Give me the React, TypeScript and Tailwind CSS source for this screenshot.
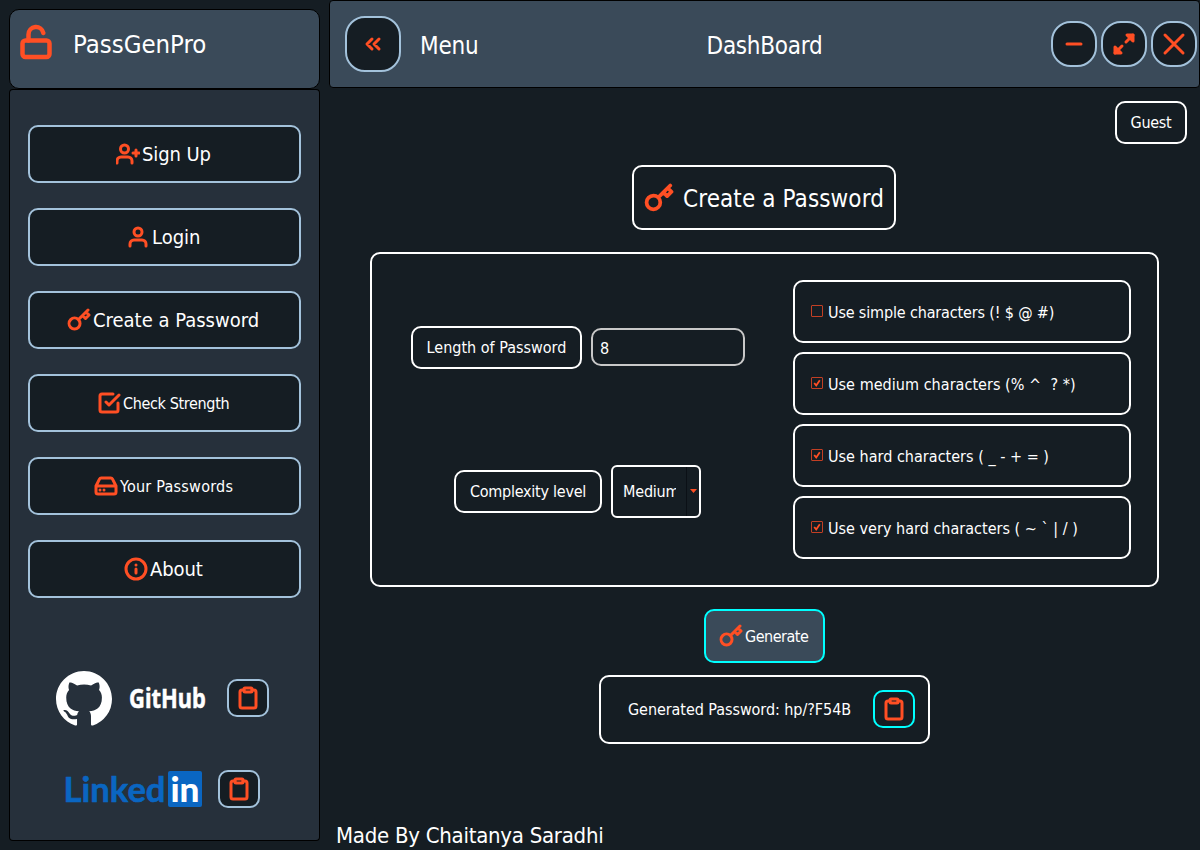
import type { ReactNode } from "react";

type IconProps = { className?: string };

function Icon({ className = "size-6", width = 3, children }: IconProps & { width?: number; children: ReactNode }) {
  return (
    <svg
      viewBox="0 0 24 24"
      fill="none"
      stroke="#ff4f24"
      strokeWidth={width}
      strokeLinecap="round"
      strokeLinejoin="round"
      className={`shrink-0 ${className}`}
    >
      {children}
    </svg>
  );
}

const UnlockIcon = ({ className }: IconProps) => (
  <Icon className={className}>
    <rect x="3" y="11" width="18" height="11" rx="2" />
    <path d="M7 11V7a5 5 0 0 1 9.9-1" />
  </Icon>
);

const UserPlusIcon = () => (
  <Icon>
    <path d="M16 21v-2a4 4 0 0 0-4-4H5a4 4 0 0 0-4 4v2M20 8v6M23 11h-6" />
    <circle cx="8.5" cy="7" r="4" />
  </Icon>
);

const UserIcon = () => (
  <Icon>
    <path d="M20 21v-2a4 4 0 0 0-4-4H8a4 4 0 0 0-4 4v2" />
    <circle cx="12" cy="7" r="4" />
  </Icon>
);

const KeyIcon = ({ className }: IconProps) => (
  <Icon className={className}>
    <path d="M21 2l-2 2m-7.61 7.61a5.5 5.5 0 1 1-7.778 7.778 5.5 5.5 0 0 1 7.777-7.777zm0 0L15.5 7.5m0 0l3 3L22 7l-3-3m-3.5 3.5L19 4" />
  </Icon>
);

const CheckSquareIcon = () => (
  <Icon>
    <path d="M9 11l3 3L22 4" />
    <path d="M21 12v7a2 2 0 0 1-2 2H5a2 2 0 0 1-2-2V5a2 2 0 0 1 2-2h11" />
  </Icon>
);

const HardDriveIcon = () => (
  <Icon>
    <path d="M22 12H2M5.45 5.11L2 12v6a2 2 0 0 0 2 2h16a2 2 0 0 0 2-2v-6l-3.45-6.89A2 2 0 0 0 16.76 4H7.24a2 2 0 0 0-1.79 1.11zM6 16h.01M10 16h.01" />
  </Icon>
);

const InfoIcon = () => (
  <Icon>
    <circle cx="12" cy="12" r="10" />
    <path d="M12 16v-4M12 8h.01" />
  </Icon>
);

const ClipboardIcon = () => (
  <Icon>
    <path d="M16 4h2a2 2 0 0 1 2 2v14a2 2 0 0 1-2 2H6a2 2 0 0 1-2-2V6a2 2 0 0 1 2-2h2" />
    <rect x="8" y="2" width="8" height="4" rx="1" />
  </Icon>
);

const ChevronsLeftIcon = () => (
  <Icon>
    <path d="M11 17l-5-5 5-5M18 17l-5-5 5-5" />
  </Icon>
);

const MinusIcon = () => (
  <Icon>
    <path d="M5 12h14" />
  </Icon>
);

const MaximizeIcon = () => (
  <Icon>
    <path d="M15 3h6v6zM9 21H3v-6z" fill="#ff4f24" />
    <path d="M21 3l-7 7M3 21l7-7" />
  </Icon>
);

const CloseIcon = () => (
  <Icon>
    <path d="M3 3l18 18M21 3L3 21" />
  </Icon>
);

const navItems = [
  { label: "Sign Up", icon: <UserPlusIcon />, pad: "pl-[86px]", text: "text-[20px] tracking-[-0.1px]" },
  { label: "Login", icon: <UserIcon />, pad: "pl-[96px]", text: "text-[20px]" },
  { label: "Create a Password", icon: <KeyIcon />, pad: "pl-[37px]", text: "text-[20px]" },
  { label: "Check Strength", icon: <CheckSquareIcon />, pad: "pl-[67px]", text: "pt-0.5 text-[16px] tracking-[-0.35px]" },
  { label: "Your Passwords", icon: <HardDriveIcon />, pad: "pl-[64px]", text: "pt-0.5 text-[16px] tracking-[0.25px]" },
  { label: "About", icon: <InfoIcon />, pad: "pl-[94px]", text: "text-[20px] tracking-[-0.1px]" },
];

const options = [
  { label: "Use simple characters (! $ @ #)", checked: false, tracking: "tracking-[-0.15px]" },
  { label: "Use medium characters (% ^  ? *)", checked: true, tracking: "tracking-[0.04px]" },
  { label: "Use hard characters ( _ - + = )", checked: true, tracking: "tracking-[0.02px]" },
  { label: "Use very hard characters ( ~ ` | / )", checked: true, tracking: "tracking-[0.02px]" },
];

function CopyButton({ active = false }: { active?: boolean }) {
  return (
    <button
      className={`flex h-[38px] w-[42px] shrink-0 items-center justify-center rounded-[10px] border-2 bg-[#151d23] ${
        active ? "border-[#00ffff]" : "border-[#a3c2db]"
      }`}
    >
      <ClipboardIcon />
    </button>
  );
}

function WindowButton({ children }: { children: ReactNode }) {
  return (
    <button className="flex size-[46px] items-center justify-center rounded-[20px] border-2 border-[#a3c2db] bg-[#151d23]">
      {children}
    </button>
  );
}

function Sidebar() {
  return (
    <aside className="mt-[9px] ml-[9px] flex w-[311px] shrink-0 flex-col">
      <div className="flex h-20 items-start rounded-[10px] border border-black bg-[#3a4a59] pt-3.5 pl-2">
        <UnlockIcon className="size-9" />
        <span className="ml-[19px] text-[25.5px] leading-[40px]">PassGenPro</span>
      </div>
      <nav className="flex h-[551px] flex-col gap-[25px] rounded-t-[4px] border border-b-0 border-black bg-[#26303b] px-[18px] pt-[35px]">
        {navItems.map((item) => (
          <button
            key={item.label}
            className={`flex h-[58px] w-[273px] shrink-0 items-center gap-0.5 rounded-[10px] border-2 border-[#a3c2db] bg-[#151d23] ${item.pad}`}
          >
            {item.icon}
            <span className={`whitespace-nowrap ${item.text}`}>{item.label}</span>
          </button>
        ))}
      </nav>
      <div className="flex h-[201px] flex-col rounded-b-[4px] border border-t-0 border-black bg-[#26303b]">
        <div className="mt-[30px] flex h-[56px] items-center pl-[46px]">
          <svg viewBox="0 0 16 16" fill="#fff" className="mt-px size-[56px] shrink-0">
            <path d="M8 0C3.58 0 0 3.58 0 8c0 3.54 2.29 6.53 5.47 7.59.4.07.55-.17.55-.38 0-.19-.01-.82-.01-1.49-2.01.37-2.53-.49-2.69-.94-.09-.23-.48-.94-.82-1.13-.28-.15-.68-.52-.01-.53.63-.01 1.08.58 1.23.82.72 1.21 1.87.87 2.33.66.07-.52.28-.87.51-1.07-1.78-.2-3.64-.89-3.64-3.95 0-.87.31-1.59.82-2.15-.08-.2-.36-1.02.08-2.12 0 0 .67-.21 2.2.82.64-.18 1.32-.27 2-.27.68 0 1.36.09 2 .27 1.53-1.04 2.2-.82 2.2-.82.44 1.1.16 1.92.08 2.12.51.56.82 1.27.82 2.15 0 3.07-1.87 3.75-3.65 3.95.29.25.54.73.54 1.48 0 1.07-.01 1.93-.01 2.2 0 .21.15.46.55.38A8.013 8.013 0 0016 8c0-4.42-3.58-8-8-8z" />
          </svg>
          <svg viewBox="0 0 78 40" className="ml-[17px] h-10 w-[78px] shrink-0 overflow-visible">
            <text
              x="0"
              y="29.5"
              fill="#fff"
              stroke="#fff"
              strokeWidth="0.5"
              textLength="77"
              lengthAdjust="spacingAndGlyphs"
              className="font-['Noto_Sans',sans-serif] text-[27px] font-bold"
            >
              GitHub
            </text>
          </svg>
          <div className="ml-[20px]">
            <CopyButton />
          </div>
        </div>
        <div className="mt-[44px] flex h-[38px] items-center pl-[55px]">
          <svg viewBox="0 0 138 38" className="h-[38px] w-[138px] shrink-0 overflow-visible">
            <text
              x="-1.5"
              y="32"
              fill="#0a66c2"
              stroke="#0a66c2"
              strokeWidth="0.6"
              textLength="102"
              lengthAdjust="spacingAndGlyphs"
              className="font-[Lato,sans-serif] text-[35px] font-bold"
            >
              Linked
            </text>
            <rect x="103" y="1" width="34" height="36" rx="2" fill="#0a66c2" />
            <text
              x="105.5"
              y="32"
              fill="#fff"
              textLength="29"
              lengthAdjust="spacingAndGlyphs"
              className="font-[Lato,sans-serif] text-[34px] font-black"
            >
              in
            </text>
          </svg>
          <div className="ml-[15px]">
            <CopyButton />
          </div>
        </div>
      </div>
    </aside>
  );
}

function CheckOption({ label, checked, tracking }: { label: string; checked: boolean; tracking: string }) {
  return (
    <label className="flex h-[63px] w-[338px] items-center gap-1 rounded-[10px] border-2 border-white pl-[15px]">
      <svg viewBox="0 0 14 14" fill="none" className="mb-[2px] size-3.5 shrink-0">
        <rect x="1.5" y="1.5" width="11" height="11" rx="0.5" stroke="#c23f24" />
        {checked && <path d="M4.2 7l2 2.4L9.8 4.2" stroke="#ff4f24" strokeWidth="1.8" />}
      </svg>
      <span className={`pt-0.5 whitespace-pre ${tracking}`}>{label}</span>
    </label>
  );
}

function PasswordForm() {
  return (
    <section className="mt-[22px] flex h-[335px] w-[789px] shrink-0 self-center rounded-[10px] border-2 border-white">
      <div className="flex w-[421px] flex-col">
        <div className="mt-[72px] flex h-[43px] items-center gap-[9px] pl-[39px]">
          <div className="flex h-[43px] w-[171px] items-center justify-center rounded-[10px] border-2 border-white pt-px whitespace-nowrap">
            Length of Password
          </div>
          <input
            defaultValue="8"
            className="mb-px h-[38px] w-[154px] rounded-[10px] border-2 border-[#c8c8c8] bg-transparent pt-0.5 pl-[7px] outline-none"
          />
        </div>
        <div className="mt-[96px] flex h-[53px] items-center gap-[9px] pl-[82px]">
          <div className="flex h-[43px] w-[148px] items-center justify-center rounded-[10px] border-2 border-white pt-px tracking-[-0.25px] whitespace-nowrap">
            Complexity level
          </div>
          <div className="flex h-[53px] w-[90px] items-center rounded-[6px] border-2 border-white pl-[10px]">
            <span className="w-[53px] overflow-hidden pt-px tracking-[-0.2px]">Medium</span>
            <span className="ml-[10px] h-full w-px bg-[#0b1016]" />
            <svg viewBox="0 0 7 4" className="mb-0.5 ml-[3px] h-1 w-[7px] shrink-0">
              <path d="M0 0h7L3.5 4z" fill="#ff4f24" />
            </svg>
          </div>
        </div>
      </div>
      <div className="flex flex-col gap-[9px] pt-[26px]">
        {options.map((o) => (
          <CheckOption key={o.label} {...o} />
        ))}
      </div>
    </section>
  );
}

function Main() {
  return (
    <main className="ml-[9px] flex w-[871px] shrink-0 flex-col">
      <header className="flex h-[88px] shrink-0 items-center rounded-[4px] border border-black bg-[#3a4a59] pr-[2px] pl-[15px] text-[24px]">
        <button className="flex size-14 shrink-0 items-center justify-center rounded-[20px] border-2 border-[#a3c2db] bg-[#151d23]">
          <ChevronsLeftIcon />
        </button>
        <span className="w-[287px] pt-1 pl-[19px] tracking-[-0.2px]">Menu</span>
        <h1 className="flex-1 pt-1 pl-[18.5px] tracking-[-0.25px]">DashBoard</h1>
        <div className="flex gap-1">
          <WindowButton>
            <MinusIcon />
          </WindowButton>
          <WindowButton>
            <MaximizeIcon />
          </WindowButton>
          <WindowButton>
            <CloseIcon />
          </WindowButton>
        </div>
      </header>
      <div className="mt-[13px] mr-[13px] flex h-[43px] w-[72px] shrink-0 items-center justify-center self-end rounded-[10px] border-2 border-white pt-px tracking-[-0.3px]">
        Guest
      </div>
      <div className="mt-[21px] mr-px flex h-[65px] w-[264px] shrink-0 items-center self-center rounded-[10px] border-2 border-white pl-[10px] text-[24px]">
        <KeyIcon className="size-[30px]" />
        <h2 className="ml-[9px] pt-0.5 tracking-[0.1px] whitespace-nowrap">Create a Password</h2>
      </div>
      <PasswordForm />
      <button className="mt-[22px] flex h-[54px] w-[121px] shrink-0 items-center gap-0.5 self-center rounded-[10px] border-2 border-[#00ffff] bg-[#3a4a59] pl-[13px]">
        <KeyIcon />
        <span className="pt-0.5 tracking-[-0.5px]">Generate</span>
      </button>
      <div className="mt-3 flex h-[69px] w-[331px] shrink-0 items-center justify-between self-center rounded-[10px] border-2 border-white pr-[13px] pl-[27px]">
        <span className="pt-px tracking-[-0.06px] whitespace-nowrap">Generated Password: hp/?F54B</span>
        <div className="mb-px">
          <CopyButton active />
        </div>
      </div>
      <footer className="mt-[78px] pl-[7px] text-[22px] leading-[28px] tracking-[-0.26px]">Made By Chaitanya Saradhi</footer>
    </main>
  );
}

export default function App() {
  return (
    <div className="flex h-[850px] w-[1200px] overflow-hidden bg-[#151d23] font-['DejaVu_Sans_Condensed','DejaVu_Sans',sans-serif] text-[16px] text-white">
      <Sidebar />
      <Main />
    </div>
  );
}
